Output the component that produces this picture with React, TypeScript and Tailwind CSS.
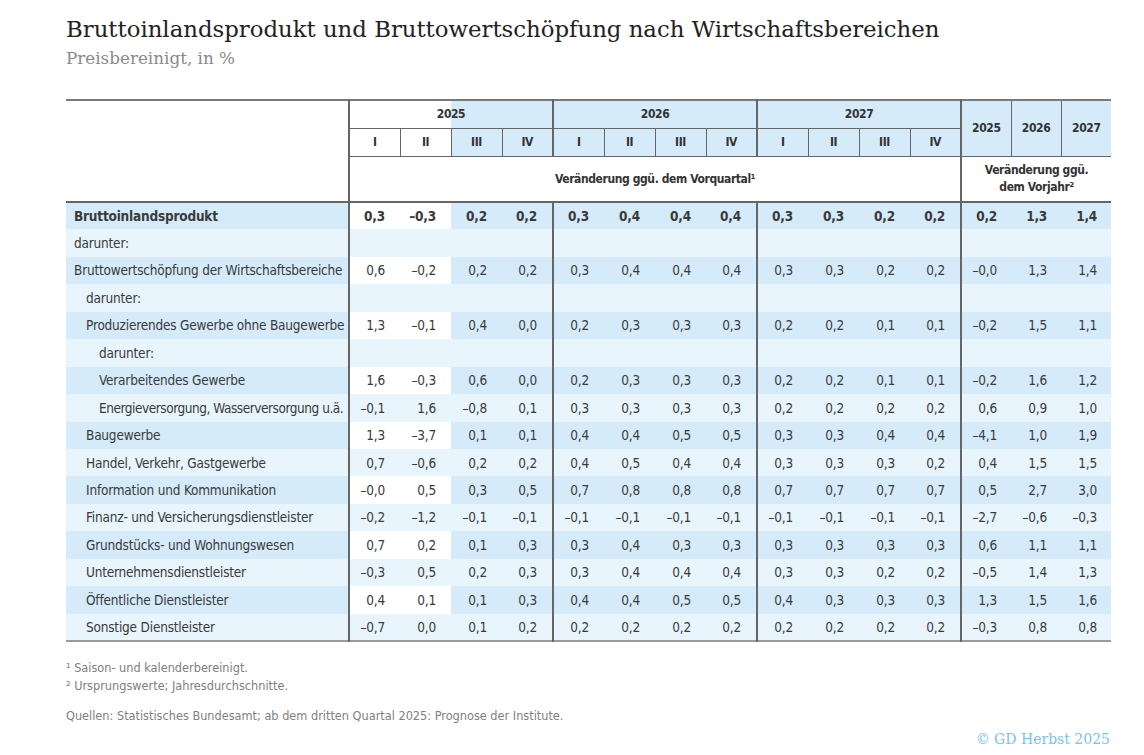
const rows = [
  { label: "Bruttoinlandsprodukt", indent: 0, bold: true, v: ["0,3", "–0,3", "0,2", "0,2", "0,3", "0,4", "0,4", "0,4", "0,3", "0,3", "0,2", "0,2", "0,2", "1,3", "1,4"] },
  { label: "darunter:", indent: 0, v: [] },
  { label: "Bruttowertschöpfung der Wirtschaftsbereiche", indent: 0, v: ["0,6", "–0,2", "0,2", "0,2", "0,3", "0,4", "0,4", "0,4", "0,3", "0,3", "0,2", "0,2", "–0,0", "1,3", "1,4"] },
  { label: "darunter:", indent: 1, v: [] },
  { label: "Produzierendes Gewerbe ohne Baugewerbe", indent: 1, v: ["1,3", "–0,1", "0,4", "0,0", "0,2", "0,3", "0,3", "0,3", "0,2", "0,2", "0,1", "0,1", "–0,2", "1,5", "1,1"] },
  { label: "darunter:", indent: 2, v: [] },
  { label: "Verarbeitendes Gewerbe", indent: 2, v: ["1,6", "–0,3", "0,6", "0,0", "0,2", "0,3", "0,3", "0,3", "0,2", "0,2", "0,1", "0,1", "–0,2", "1,6", "1,2"] },
  { label: "Energieversorgung, Wasserversorgung u.ä.", indent: 2, tight: true, v: ["–0,1", "1,6", "–0,8", "0,1", "0,3", "0,3", "0,3", "0,3", "0,2", "0,2", "0,2", "0,2", "0,6", "0,9", "1,0"] },
  { label: "Baugewerbe", indent: 1, v: ["1,3", "–3,7", "0,1", "0,1", "0,4", "0,4", "0,5", "0,5", "0,3", "0,3", "0,4", "0,4", "–4,1", "1,0", "1,9"] },
  { label: "Handel, Verkehr, Gastgewerbe", indent: 1, v: ["0,7", "–0,6", "0,2", "0,2", "0,4", "0,5", "0,4", "0,4", "0,3", "0,3", "0,3", "0,2", "0,4", "1,5", "1,5"] },
  { label: "Information und Kommunikation", indent: 1, v: ["–0,0", "0,5", "0,3", "0,5", "0,7", "0,8", "0,8", "0,8", "0,7", "0,7", "0,7", "0,7", "0,5", "2,7", "3,0"] },
  { label: "Finanz- und Versicherungsdienstleister", indent: 1, v: ["–0,2", "–1,2", "–0,1", "–0,1", "–0,1", "–0,1", "–0,1", "–0,1", "–0,1", "–0,1", "–0,1", "–0,1", "–2,7", "–0,6", "–0,3"] },
  { label: "Grundstücks- und Wohnungswesen", indent: 1, v: ["0,7", "0,2", "0,1", "0,3", "0,3", "0,4", "0,3", "0,3", "0,3", "0,3", "0,3", "0,3", "0,6", "1,1", "1,1"] },
  { label: "Unternehmensdienstleister", indent: 1, v: ["–0,3", "0,5", "0,2", "0,3", "0,3", "0,4", "0,4", "0,4", "0,3", "0,3", "0,2", "0,2", "–0,5", "1,4", "1,3"] },
  { label: "Öffentliche Dienstleister", indent: 1, v: ["0,4", "0,1", "0,1", "0,3", "0,4", "0,4", "0,5", "0,5", "0,4", "0,3", "0,3", "0,3", "1,3", "1,5", "1,6"] },
  { label: "Sonstige Dienstleister", indent: 1, v: ["–0,7", "0,0", "0,1", "0,2", "0,2", "0,2", "0,2", "0,2", "0,2", "0,2", "0,2", "0,2", "–0,3", "0,8", "0,8"] },
];

const quarters = ["I", "II", "III", "IV"];
const indents = ["pl-[8px]", "pl-[20px]", "pl-[33px]"];

export default function App() {
  return (
    <div className="min-h-[755px] w-[1144px] bg-white text-[#3a3a3a]">
      <div className="pl-[66px] pt-[14px]">
        <h1 className="font-['DejaVu_Serif',serif] text-[22.8px] leading-[30px] text-[#222]">
          Bruttoinlandsprodukt und Bruttowertschöpfung nach Wirtschaftsbereichen
        </h1>
        <p className="mt-[2px] font-['DejaVu_Serif',serif] text-[16.8px] leading-[24px] text-[#8a8a8a]">
          Preisbereinigt, in %
        </p>

        <table className="mt-[29px] w-[1045px] table-fixed font-['Liberation_Sans_Narrow','DejaVu_Sans_Condensed',sans-serif] text-[13.5px] tracking-[-0.2px]">
          <colgroup>
            <col className="w-[283px]" />
            {Array.from({ length: 12 }).map((_, i) => (
              <col key={i} className="w-[51px]" />
            ))}
            <col className="w-[50px]" />
            <col className="w-[50px]" />
            <col className="w-[50px]" />
          </colgroup>
          <thead className="font-bold text-[12px] tracking-[-0.4px] text-[#333]">
            <tr className="h-[28px] border-t-2 border-[#7a7a7a]">
              <th rowSpan={3} className="border-b-2 border-r-2 border-[#666] bg-white" />
              <th colSpan={4} className="border-b border-r-2 border-[#666] bg-[linear-gradient(to_right,#fff_50%,#d5ebfa_50%)] text-center">
                2025
              </th>
              <th colSpan={4} className="border-b border-r-2 border-[#666] bg-[#d5ebfa] text-center">
                2026
              </th>
              <th colSpan={4} className="border-b border-r-2 border-[#666] bg-[#d5ebfa] text-center">
                2027
              </th>
              <th rowSpan={2} className="border-b border-r border-[#666] bg-[#d5ebfa] text-center">2025</th>
              <th rowSpan={2} className="border-b border-r border-[#666] bg-[#d5ebfa] text-center">2026</th>
              <th rowSpan={2} className="border-b border-[#666] bg-[#d5ebfa] text-center">2027</th>
            </tr>
            <tr className="h-[28px]">
              {[0, 1, 2].map((g) =>
                quarters.map((q, i) => (
                  <th
                    key={g + q}
                    className={`border-b border-[#666] text-center ${i === 3 ? "border-r-2" : "border-r"} ${
                      g === 0 && i < 2 ? "bg-white" : "bg-[#d5ebfa]"
                    }`}
                  >
                    {q}
                  </th>
                ))
              )}
            </tr>
            <tr className="h-[46px]">
              <th colSpan={12} className="border-b-2 border-r-2 border-[#666] bg-white text-center">
                Veränderung ggü. dem Vorquartal¹
              </th>
              <th colSpan={3} className="border-b-2 border-[#666] bg-white text-center leading-[17px]">
                Veränderung ggü.
                <br />
                dem Vorjahr²
              </th>
            </tr>
          </thead>
          <tbody className="border-b-2 border-[#9a9a9a]">
            {rows.map((r, ri) => {
              const dark = ri % 2 === 0;
              return (
                <tr key={ri} className={`h-[27.45px] ${dark ? "bg-[#d5ebfa]" : "bg-[#e8f5fd]"} ${r.bold ? "font-bold" : ""}`}>
                  <td className={`whitespace-nowrap border-r-2 border-[#666] ${indents[r.indent]} ${r.tight ? "tracking-[-0.45px]" : ""}`}>
                    {r.label}
                  </td>
                  {Array.from({ length: 15 }).map((_, ci) => {
                    const groupEnd = ci === 3 || ci === 7 || ci === 11;
                    const white = dark && ci < 2;
                    return (
                      <td
                        key={ci}
                        className={`text-right ${ci >= 12 ? "pr-[14px]" : "pr-[15px]"} ${groupEnd ? "border-r-2 border-[#666]" : ""} ${
                          white ? "bg-white" : ""
                        }`}
                      >
                        {r.v[ci] ?? ""}
                      </td>
                    );
                  })}
                </tr>
              );
            })}
          </tbody>
        </table>

        <div className="mt-[17px] font-['Liberation_Sans_Narrow','DejaVu_Sans_Condensed',sans-serif] text-[12.6px] leading-[18px] text-[#808080]">
          <p>¹ Saison- und kalenderbereinigt.</p>
          <p>² Ursprungswerte; Jahresdurchschnitte.</p>
          <p className="mt-[12px]">Quellen: Statistisches Bundesamt; ab dem dritten Quartal 2025: Prognose der Institute.</p>
        </div>
      </div>
      <div className="mt-[4px] flex justify-end pr-[34px]">
        <span className="font-['DejaVu_Serif',serif] text-[14px] leading-[20px] text-[#79c2ee]">© GD Herbst 2025</span>
      </div>
    </div>
  );
}
